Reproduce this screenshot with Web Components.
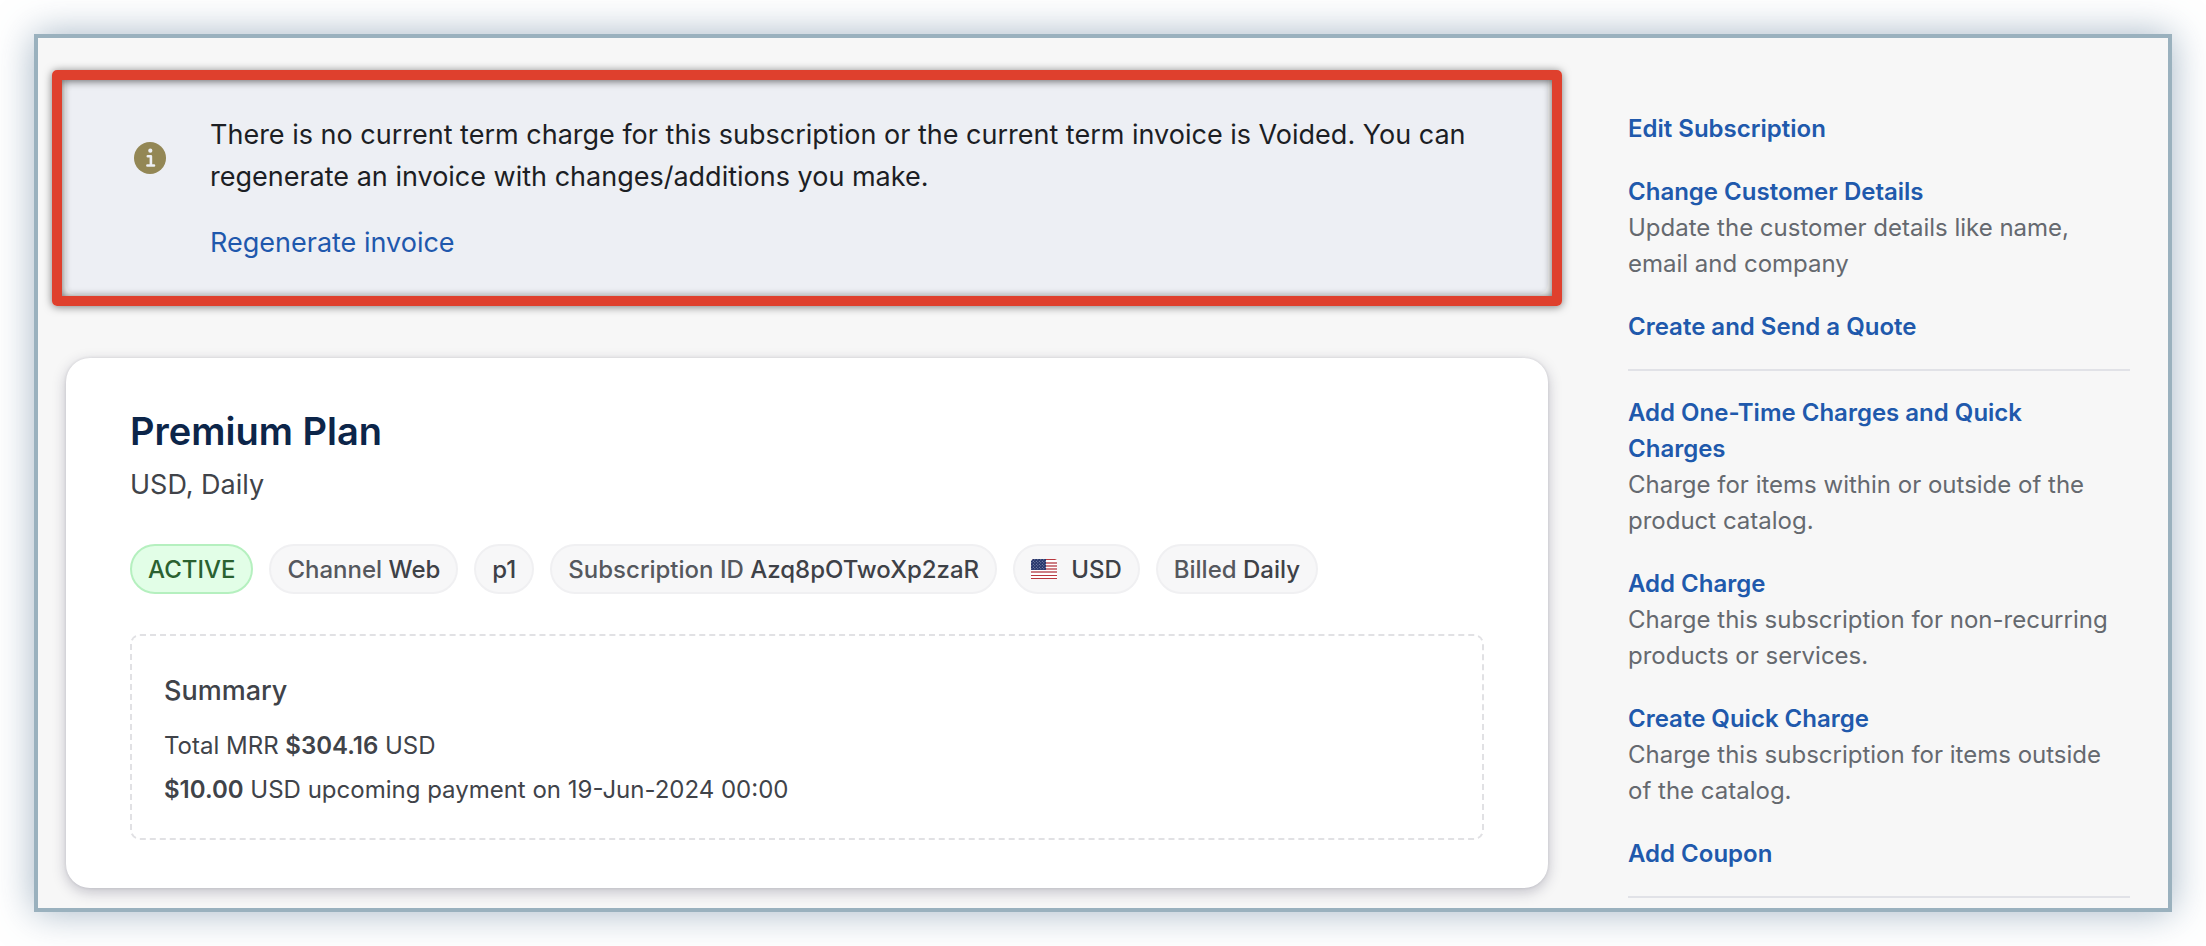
<!DOCTYPE html>
<html lang="en">
<head>
<meta charset="utf-8">
<title>Premium Plan subscription</title>
<style>
  body { margin: 0; background: #fff; font-family: Inter, "Liberation Sans", sans-serif; }
</style>
</head>
<body>
<subscription-page></subscription-page>
<script>
const define = (name, html) => {
  const template = document.createElement('template');
  template.innerHTML = html;
  customElements.define(name, class extends HTMLElement {
    constructor() {
      super();
      this.attachShadow({ mode: 'open' }).append(template.content.cloneNode(true));
    }
  });
};

define('info-banner', `
  <style>
    :host { display: block; position: relative; }
    .banner { display: flex; gap: 44px; padding: 34px 60px 30px 68px; background: #edeff4; border-radius: 0 0 10px 10px; color: #1c1e24; font-size: 27px; line-height: 42px; }
    .icon { flex: none; display: flex; align-items: center; height: 88px; }
    svg { display: block; width: 32px; height: 32px; }
    p { margin: 0 0 24px; }
    a { color: #1f58ad; text-decoration: none; }
    .highlight { position: absolute; inset: -10px -14px -12px; border: 10px solid #df402d; border-radius: 5px; box-shadow: 0 1px 9px rgba(0,0,0,.5), inset 0 1px 9px rgba(0,0,0,.6); pointer-events: none; }
  </style>
  <div class="banner" role="status">
    <span class="icon"><svg viewBox="0 0 32 32" aria-hidden="true">
      <circle cx="16" cy="16" r="16" fill="#938755"/>
      <circle cx="16.300" cy="8.700" r="2.100" fill="#edeff4"/>
      <path d="M13.800 14.200H16.900V23.500M13.400 23.500H20" fill="none" stroke="#edeff4" stroke-width="2.600" stroke-linecap="round" stroke-linejoin="round"/>
    </svg></span>
    <div><p><slot></slot></p><a href="#regenerate"><slot name="action"></slot></a></div>
  </div>
  <div class="highlight"></div>`);

define('info-pill', `
  <style>
    :host { display: inline-flex; align-items: center; box-sizing: border-box; height: 50px; padding: 2px 16px 0; border: 2px solid #f0f0f2; border-radius: 25px; background: #f7f7f8; color: #3e4147; font-size: 24px; line-height: 36px; font-weight: 500; white-space: pre; }
    :host([status]) { background: #e2fee7; border-color: #b5f0bf; color: #2a6130; }
    ::slotted([slot=label]) { color: #55585e; }
    ::slotted([slot=icon]) { margin: 0 14px 2px 0; }
  </style>
  <slot name="icon"></slot><slot name="label"></slot><slot></slot>`);

define('us-flag', `
  <style>:host { display: block; white-space: normal; } svg { display: block; width: 26px; height: 20px; }</style>
  <svg viewBox="0 0 26 20" role="img" aria-label="United States">
    <defs>
      <clipPath id="c"><path d="M2 0H24L26 1V20H0V2Z"/></clipPath>
      <pattern id="s" width="3" height="3" patternUnits="userSpaceOnUse"><rect width="3" height="3" fill="#25356b"/><circle cx=".8" cy=".8" r=".5" fill="#a5aec9"/><circle cx="2.300" cy="2.300" r=".5" fill="#a5aec9"/></pattern>
    </defs>
    <g clip-path="url(#c)">
      <rect width="26" height="20" fill="#fff"/>
      <path d="M0 .5H26M0 16.500H26M0 19.500H26" stroke="#b8383f" stroke-width="1.200"/>
      <path d="M0 4H26M0 7H26M0 10H26M0 13H26" stroke="#cd7e84" stroke-width="2"/>
      <rect width="15" height="11" fill="url(#s)"/>
    </g>
  </svg>`);

define('plan-card', `
  <style>
    :host { display: block; padding: 44px 64px 48px; background: #fff; border-radius: 24px; box-shadow: 0 0 3px rgba(30,30,60,.12), 0 4px 14px rgba(40,35,65,.26); color: #404349; }
    h1 { margin: 0; font-size: 38px; line-height: 58px; font-weight: 600; color: #0c2549; }
    .sub { margin: 4px 0 0; font-size: 27px; line-height: 42px; }
    .pills { display: flex; flex-wrap: wrap; gap: 16px; margin: 38px 0 40px; }
    section { padding: 32px 32px 26px; border: 2px dashed #e1e1e4; border-radius: 10px; font-size: 24px; line-height: 44px; }
    h2 { margin: 0 0 10px; font-size: 27px; line-height: 46px; font-weight: 500; }
    ::slotted(p) { margin: 0; }
  </style>
  <h1><slot name="title"></slot></h1>
  <p class="sub"><slot name="subtitle"></slot></p>
  <div class="pills"><slot name="pill"></slot></div>
  <section><h2>Summary</h2><slot></slot></section>`);

define('action-item', `
  <style>
    :host { display: block; padding-right: 12px; font-size: 24px; line-height: 36px; color: #65696f; }
    a { display: block; color: #2059ac; font-weight: 600; text-decoration: none; }
  </style>
  <a href="#action"><slot name="title"></slot></a><slot></slot>`);

define('action-group', `
  <style>
    :host { display: flex; flex-direction: column; gap: 27px; padding-bottom: 24px; margin-bottom: 24px; border-bottom: 2px solid #e1e2e7; }
    :host(:last-child) { margin-bottom: 0; }
  </style>
  <slot></slot>`);

define('subscription-page', `
  <style>
    :host { display: block; padding: 34px; }
    .frame { display: grid; grid-template-columns: minmax(0, 1fr) 502px; column-gap: 80px; padding: 42px 38px 20px 28px; border: 4px solid #9ab1be; background: #f7f7f7; box-shadow: 0 0 36px rgba(90,120,150,.55); }
    main { display: grid; gap: 64px; align-content: start; }
    aside { padding-top: 31px; margin-bottom: -20px; }
    strong { font-weight: 600; }
  </style>
  <div class="frame">
    <main>
      <info-banner>There is no current term charge for this subscription or the current term invoice is Voided. You can regenerate an invoice with changes/additions you make.<span slot="action">Regenerate invoice</span></info-banner>
      <plan-card>
        <span slot="title">Premium Plan</span>
        <span slot="subtitle">USD, Daily</span>
        <info-pill slot="pill" status>ACTIVE</info-pill>
        <info-pill slot="pill"><span slot="label">Channel </span>Web</info-pill>
        <info-pill slot="pill">p1</info-pill>
        <info-pill slot="pill"><span slot="label">Subscription ID </span>Azq8pOTwoXp2zaR</info-pill>
        <info-pill slot="pill"><us-flag slot="icon"></us-flag>USD</info-pill>
        <info-pill slot="pill"><span slot="label">Billed </span>Daily</info-pill>
        <p>Total MRR <strong>$304.16</strong> USD</p>
        <p><strong>$10.00</strong> USD upcoming payment on 19-Jun-2024 00:00</p>
      </plan-card>
    </main>
    <aside>
      <action-group>
        <action-item><span slot="title">Edit Subscription</span></action-item>
        <action-item><span slot="title">Change Customer Details</span>Update the customer details like name, email and company</action-item>
        <action-item><span slot="title">Create and Send a Quote</span></action-item>
      </action-group>
      <action-group>
        <action-item><span slot="title">Add One-Time Charges and Quick Charges</span>Charge for items within or outside of the product catalog.</action-item>
        <action-item><span slot="title">Add Charge</span>Charge this subscription for non-recurring products or services.</action-item>
        <action-item><span slot="title">Create Quick Charge</span>Charge this subscription for items outside of the catalog.</action-item>
        <action-item><span slot="title">Add Coupon</span></action-item>
      </action-group>
    </aside>
  </div>`);
</script>
</body>
</html>
